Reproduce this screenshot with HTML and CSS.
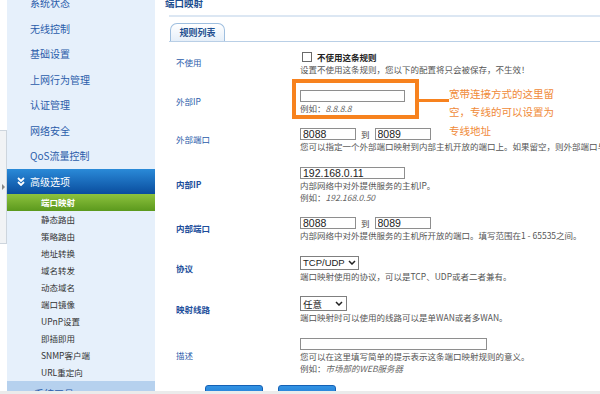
FILE: index.html
```html
<!DOCTYPE html>
<html lang="zh-CN">
<head>
    <meta charset="UTF-8">
    <meta name="viewport" content="width=device-width, initial-scale=1.0">
    <title>端口映射</title>
    <link rel="stylesheet" href="styles.css">
</head>
<body>

<div class="page">
    <!-- collapse handle -->
    <div class="strip">
        <div class="strip-handle"><span class="strip-arrow"></span></div>
    </div>

    <!-- left menu -->
    <aside class="sidebar">
        <ul class="menu">
            <li class="menu-item">系统状态</li>
            <li class="menu-item">无线控制</li>
            <li class="menu-item">基础设置</li>
            <li class="menu-item">上网行为管理</li>
            <li class="menu-item">认证管理</li>
            <li class="menu-item">网络安全</li>
            <li class="menu-item">QoS流量控制</li>
            <li class="menu-item active">
                <svg class="menu-chevron" width="8" height="9" viewBox="0 0 8 9">
                    <polyline points="1,1 4,4 7,1" fill="none" stroke="#fff" stroke-width="1.8"/>
                    <polyline points="1,5 4,8 7,5" fill="none" stroke="#fff" stroke-width="1.8"/>
                </svg>
                高级选项
            </li>
        </ul>
        <ul class="submenu">
            <li class="current">端口映射</li>
            <li>静态路由</li>
            <li>策略路由</li>
            <li>地址转换</li>
            <li>域名转发</li>
            <li>动态域名</li>
            <li>端口镜像</li>
            <li>UPnP设置</li>
            <li>即插即用</li>
            <li>SNMP客户端</li>
            <li>URL重定向</li>
        </ul>
        <div class="menu-item menu-next">系统工具</div>
    </aside>

    <!-- content -->
    <main class="main">
        <h1 class="page-title">端口映射</h1>

        <div class="tabs">
            <span class="tab">规则列表</span>
        </div>

        <div class="form">
            <div class="row">
                <div class="label">不使用</div>
                <div class="field">
                    <label class="check-line"><input type="checkbox" class="check"> 不使用这条规则</label>
                    <div class="hint">设置不使用这条规则，您以下的配置将只会被保存，不生效！</div>
                </div>
            </div>

            <div class="row">
                <div class="label">外部IP</div>
                <div class="field">
                    <input type="text" class="text-input wide">
                    <div class="hint">例如：<em>8.8.8.8</em></div>

                    <!-- annotation -->
                    <div class="note-box"></div>
                    <div class="note-line"></div>
                    <div class="note-text">宽带连接方式的这里留<br>空，专线的可以设置为<br>专线地址</div>
                </div>
            </div>

            <div class="row">
                <div class="label">外部端口</div>
                <div class="field">
                    <div class="port-line">
                        <input type="text" class="text-input port" value="8088">
                        <span class="to">到</span>
                        <input type="text" class="text-input port" value="8089">
                    </div>
                    <div class="hint">您可以指定一个外部端口映射到内部主机开放的端口上。如果留空，则外部端口与内部端口相同。</div>
                </div>
            </div>

            <div class="row">
                <div class="label strong">内部IP</div>
                <div class="field">
                    <input type="text" class="text-input wide" value="192.168.0.11">
                    <div class="hint">内部网络中对外提供服务的主机IP。</div>
                    <div class="hint">例如：<em>192.168.0.50</em></div>
                </div>
            </div>

            <div class="row">
                <div class="label strong">内部端口</div>
                <div class="field">
                    <div class="port-line">
                        <input type="text" class="text-input port" value="8088">
                        <span class="to">到</span>
                        <input type="text" class="text-input port" value="8089">
                    </div>
                    <div class="hint">内部网络中对外提供服务的主机所开放的端口。填写范围在1 - 65535之间。</div>
                </div>
            </div>

            <div class="row">
                <div class="label strong">协议</div>
                <div class="field">
                    <div class="select proto">
                        <span>TCP/UDP</span>
                        <svg width="8" height="5" viewBox="0 0 8 5"><polyline points="1,1 4,4 7,1" fill="none" stroke="#222" stroke-width="1.5"/></svg>
                    </div>
                    <div class="hint">端口映射使用的协议，可以是TCP、UDP或者二者兼有。</div>
                </div>
            </div>

            <div class="row">
                <div class="label strong">映射线路</div>
                <div class="field">
                    <div class="select line">
                        <span>任意</span>
                        <svg width="8" height="5" viewBox="0 0 8 5"><polyline points="1,1 4,4 7,1" fill="none" stroke="#222" stroke-width="1.5"/></svg>
                    </div>
                    <div class="hint">端口映射时可以使用的线路可以是单WAN或者多WAN。</div>
                </div>
            </div>

            <div class="row">
                <div class="label">描述</div>
                <div class="field">
                    <input type="text" class="text-input desc">
                    <div class="hint">您可以在这里填写简单的提示表示这条端口映射规则的意义。</div>
                    <div class="hint">例如：<em>市场部的WEB服务器</em></div>
                </div>
            </div>
        </div>

        <div class="actions">
            <button type="button" class="btn">保存</button>
            <button type="button" class="btn">返回</button>
        </div>
    </main>
</div>

<div class="statusbar"></div>

</body>
</html>
```

FILE: styles.css
```css
body {
    margin: 0;
    padding: 0;
    font-family: "Noto Sans CJK SC", "Noto Sans", sans-serif;
    background-color: #fff;
    overflow: hidden;
}

ul {
    list-style: none;
    margin: 0;
    padding: 0;
}

.page {
    display: flex;
    height: 391px;
    overflow: hidden;
}

/* collapse handle */
.strip {
    width: 7px;
    flex-shrink: 0;
    background-color: #fff;
}

.strip-handle {
    margin-top: 130px;
    height: 112px;
    background-color: #f1f3f5;
    border: 1px solid #cdd5dd;
    border-left: none;
    position: relative;
}

.strip-arrow {
    position: absolute;
    left: 2px;
    top: 53px;
    width: 0;
    height: 0;
    border-left: 3px solid #888;
    border-top: 3px solid transparent;
    border-bottom: 3px solid transparent;
}

/* sidebar */
.sidebar {
    width: 148px;
    flex-shrink: 0;
    margin-top: -10px;
    background-color: #e6f0fb;
}

.menu-item {
    height: 25.5px;
    line-height: 25.5px;
    padding-left: 23px;
    font-size: 10px;
    color: #2a5caa;
}

.menu-item.active {
    display: flex;
    align-items: center;
    padding-left: 10px;
    color: #fff;
    background: linear-gradient(#2a8ad8, #0a4d9e);
}

.menu-chevron {
    margin-right: 5px;
}

.submenu li {
    height: 17px;
    line-height: 17px;
    padding-left: 34px;
    font-size: 8.5px;
    color: #333;
}

.submenu li.current {
    color: #fff;
    font-weight: bold;
    background: linear-gradient(#8dc23e, #5b991d);
}

.menu-next {
    background-color: #b6d1ee;
    padding-left: 27px;
}

/* main area */
.main {
    flex: 1;
    min-width: 0;
    margin-top: -10px;
    padding-left: 14px;
    overflow: hidden;
}

.page-title {
    margin: 0;
    padding-top: 2px;
    line-height: 23px;
    font-size: 9.5px;
    font-weight: bold;
    color: #1d4e8f;
    text-indent: -4px;
    border-bottom: 2px solid #dce7f3;
}

.tabs {
    margin-top: 6px;
    padding-left: 1px;
    border-bottom: 1px solid #b9cfe6;
    display: flex;
}

.tab {
    width: 53px;
    height: 17px;
    line-height: 17px;
    text-align: center;
    font-size: 9px;
    font-weight: bold;
    color: #1d4e8f;
    border: 1px solid #9fbfdf;
    border-bottom: none;
    border-radius: 7px 7px 0 0;
    background: linear-gradient(#ffffff, #e6eff9);
}

.form {
    margin-top: 2px;
}

.row {
    display: flex;
    align-items: center;
    padding: 7px 0 7.5px 0;
}

.label {
    width: 124px;
    padding-left: 7px;
    padding-bottom: 2px;
    flex-shrink: 0;
    font-size: 8.5px;
    color: #2a5caa;
}

.label.strong {
    font-weight: bold;
    color: #1e4f9c;
}

.field {
    flex: 1;
    min-width: 0;
    position: relative;
    white-space: nowrap;
}

.hint {
    height: 12px;
    line-height: 12px;
    font-size: 8.5px;
    color: #555;
}

.hint em {
    font-style: italic;
    color: #666;
}

.check-line {
    display: flex;
    align-items: center;
    height: 12px;
    font-size: 8.5px;
    font-weight: bold;
    color: #222;
}

.check {
    appearance: none;
    -webkit-appearance: none;
    width: 10px;
    height: 10px;
    margin: 0 5px 0 2px;
    border: 1px solid #6a6a6a;
    background-color: #fff;
}

.text-input {
    display: block;
    box-sizing: border-box;
    height: 12px;
    margin: 0;
    padding: 0 2px;
    border: 1px solid #8e8e8e;
    font-family: "Liberation Sans", Arial, sans-serif;
    font-size: 10.5px;
    color: #222;
    outline: none;
}

.text-input.wide {
    width: 105px;
}

.text-input.port {
    width: 56px;
}

.text-input.desc {
    width: 187px;
}

.port-line {
    display: flex;
    align-items: center;
}

.to {
    font-size: 8.5px;
    color: #444;
    margin: 0 5px;
}

.select {
    box-sizing: border-box;
    display: flex;
    align-items: center;
    justify-content: space-between;
    padding: 0 2px 0 2px;
    border: 1px solid #7f7f7f;
    font-family: "Liberation Sans", "Noto Sans CJK SC", sans-serif;
    font-size: 9.5px;
    color: #222;
}

.select.proto {
    width: 59px;
    height: 14px;
}

.select.line {
    width: 47px;
    height: 15px;
    padding-right: 3px;
}

/* orange annotation */
.note-box {
    position: absolute;
    left: -8px;
    top: -10.5px;
    width: 127px;
    height: 40px;
    box-sizing: border-box;
    border: 4px solid #f7821e;
}

.note-line {
    position: absolute;
    left: 119px;
    top: 9.5px;
    width: 30px;
    height: 3px;
    background-color: #f7821e;
}

.note-text {
    position: absolute;
    left: 149px;
    top: -5px;
    line-height: 18.5px;
    font-size: 10.5px;
    color: #f08a38;
}

/* buttons */
.actions {
    display: flex;
    gap: 15px;
    margin-top: 4px;
    padding-left: 36px;
}

.btn {
    width: 58px;
    height: 22px;
    border: 1px solid #1461b5;
    border-radius: 3px;
    background: linear-gradient(#3293e4, #1668c2);
    color: #fff;
    font-family: "Noto Sans CJK SC", sans-serif;
    font-size: 10px;
    padding: 0;
}

.statusbar {
    height: 3px;
    background-color: #ebebeb;
}
```
